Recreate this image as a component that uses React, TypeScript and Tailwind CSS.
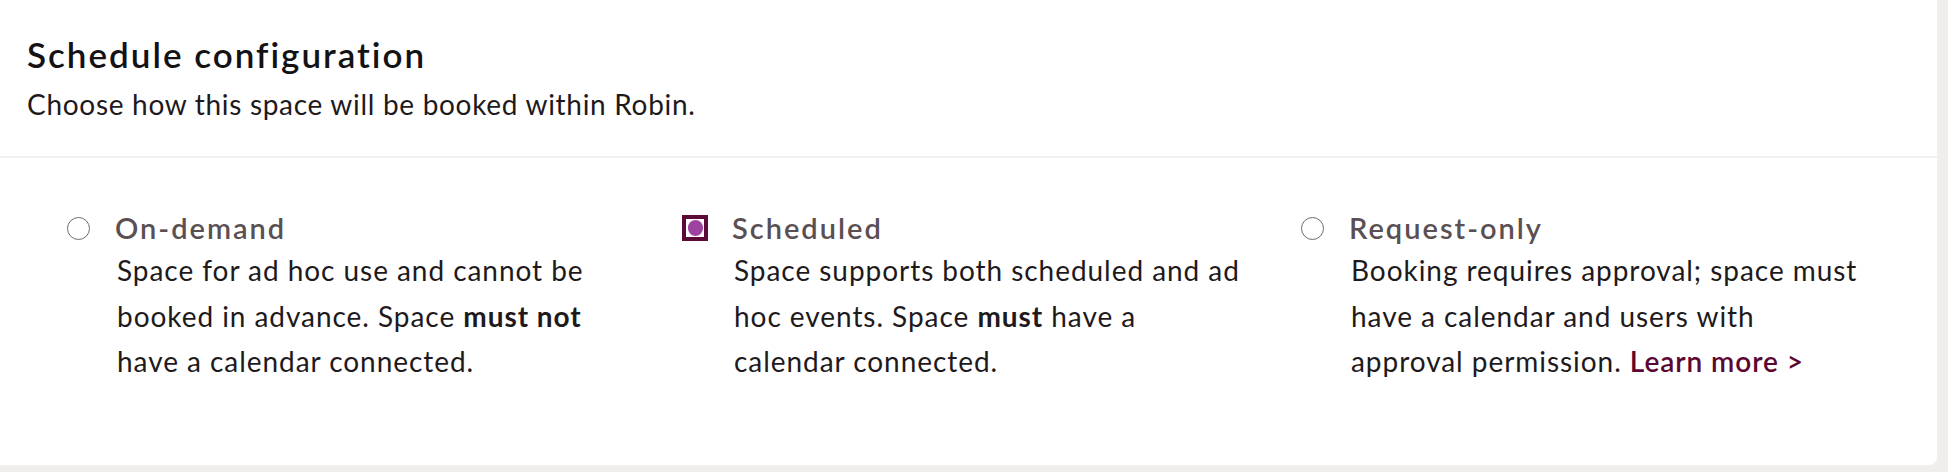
import React from "react";

const font = { fontFamily: "Lato, 'Noto Sans', sans-serif" };

function EmptyRadio() {
  return (
    <span className="flex h-[26px] w-[26px] items-center justify-center">
      <span className="block h-[23px] w-[23px] rounded-full border-[1.5px] border-[#6f6a6c] bg-white" />
    </span>
  );
}

function SelectedRadio() {
  return (
    <span className="flex h-[26px] w-[26px] items-center justify-center bg-[#5c0a37]">
      <span className="flex h-[18px] w-[18px] items-center justify-center bg-white">
        <span className="block h-[16px] w-[15px] rounded-full bg-[#9e43a0]" />
      </span>
    </span>
  );
}

function Option({
  selected,
  label,
  children,
}: {
  selected?: boolean;
  label: string;
  children: React.ReactNode;
}) {
  return (
    <div className="flex flex-col">
      <div className="flex items-center gap-[24px]">
        {selected ? <SelectedRadio /> : <EmptyRadio />}
        <span className="text-[29px] leading-[40px] font-semibold text-[#5a5053] tracking-[2px]">
          {label}
        </span>
      </div>
      <p className="pl-[52px] whitespace-nowrap text-[28px] leading-[45.5px] text-[#1e1a1c] tracking-[0.95px]">
        {children}
      </p>
    </div>
  );
}

export default function App() {
  return (
    <div className="h-[472px] w-[1948px] bg-[#efeeed]" style={font}>
      <div className="h-[467px] w-[1939px] rounded-br-[10px] border-b-2 border-r-2 border-[#f2eeeb] bg-white">
        <div className="h-[158px] border-b-2 border-[#f3efec] pl-[27px] pt-[34px]">
          <h1 className="text-[35px] leading-[40px] font-semibold text-[#141214] tracking-[2px]">
            Schedule configuration
          </h1>
          <p className="mt-[12px] text-[28px] leading-[36px] text-[#1e1a1c] tracking-[0.7px]">
            Choose how this space will be booked within Robin.
          </p>
        </div>
        <div className="grid grid-cols-[617px_617px_617px] pl-[65px] pt-[50px]">
          <Option label="On-demand">
            Space for ad hoc use and cannot be
            <br />
            booked in advance. Space <b className="font-bold">must not</b>
            <br />
            have a calendar connected.
          </Option>
          <Option selected label="Scheduled">
            Space supports both scheduled and ad
            <br />
            hoc events. Space <b className="font-bold">must</b> have a
            <br />
            calendar connected.
          </Option>
          <Option label="Request-only">
            Booking requires approval; space must
            <br />
            have a calendar and users with
            <br />
            approval permission.{" "}
            <a className="font-semibold text-[#5c0632]" href="#">
              Learn more &gt;
            </a>
          </Option>
        </div>
      </div>
    </div>
  );
}
